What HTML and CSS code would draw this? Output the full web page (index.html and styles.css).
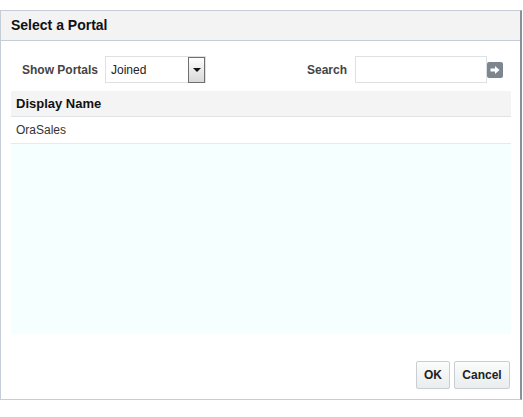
FILE: index.html
```html
<!DOCTYPE html>
<html lang="en">
<head>
  <meta charset="UTF-8">
  <title>Select a Portal</title>
  <link rel="stylesheet" href="styles.css">
</head>
<body>
  <div class="dialog">
    <div class="dialog-header">Select a Portal</div>

    <div class="dialog-body">
      <div class="toolbar">
        <div class="field">
          <label class="field-label">Show Portals</label>
          <div class="select">
            <span class="select-value">Joined</span>
            <span class="select-btn"><span class="caret"></span></span>
          </div>
        </div>
        <div class="field search">
          <label class="field-label">Search</label>
          <input class="search-input" type="text">
          <span class="go-btn">
            <svg width="16" height="16" viewBox="0 0 16 16">
              <rect x="0" y="0" width="16" height="16" rx="2" fill="#7d868f"/>
              <path d="M3.5 6.5h4.5V4l4.5 4-4.5 4V9.5H3.5z" fill="#fff"/>
            </svg>
          </span>
        </div>
      </div>

      <div class="table">
        <div class="table-head">Display Name</div>
        <div class="table-row">OraSales</div>
        <div class="table-empty"></div>
      </div>

      <div class="actions">
        <button class="btn btn-ok">OK</button>
        <button class="btn btn-cancel">Cancel</button>
      </div>
    </div>
  </div>
</body>
</html>
```

FILE: styles.css
```css
* {
  margin: 0;
  padding: 0;
  box-sizing: border-box;
}

body {
  font-family: "Liberation Sans", Arial, sans-serif;
  font-size: 12px;
  color: #333;
  background: #fff;
}

.dialog {
  margin-top: 10px;
  width: 522px;
  height: 390px;
  border: 1px solid #c5cdd6;
  border-right: 2px solid #8a9097;
  display: flex;
  flex-direction: column;
}

.dialog-header {
  height: 30px;
  padding: 6px 10px 0;
  background: #f3f3f3;
  border-bottom: 1px solid #c5cdd6;
  font-size: 14px;
  font-weight: bold;
  color: #111;
}

.dialog-body {
  flex: 1;
  display: flex;
  flex-direction: column;
  padding: 0 9px 10px 10px;
}

.toolbar {
  display: flex;
  justify-content: space-between;
  align-items: center;
  padding: 15px 8px 8px 11px;
}

.field {
  display: flex;
  align-items: center;
}

.field-label {
  font-weight: bold;
  color: #444;
  margin-right: 7px;
}

.search .field-label {
  margin-right: 8px;
}

.select {
  display: flex;
  align-items: center;
  width: 101px;
  height: 27px;
  border: 1px solid #dde1e4;
}

.select-value {
  flex: 1;
  padding-left: 5px;
  color: #222;
}

.select-btn {
  width: 17px;
  height: 26px;
  border: 1px solid #6f6f6f;
  background: linear-gradient(#fdfdfd, #d8d8d8);
  display: flex;
  align-items: center;
  justify-content: center;
}

.caret {
  width: 0;
  height: 0;
  border-left: 4px solid transparent;
  border-right: 4px solid transparent;
  border-top: 4px solid #111;
}

.search-input {
  width: 132px;
  height: 27px;
  border: 1px solid #dde1e4;
  outline: none;
}

.go-btn {
  display: flex;
}

.table {
  flex: 1;
  display: flex;
  flex-direction: column;
  margin-bottom: 27px;
}

.table-head {
  height: 26px;
  padding: 5px 5px 0;
  background: #f4f4f4;
  border-bottom: 1px solid #dfe3e6;
  font-size: 13px;
  font-weight: bold;
  color: #111;
}

.table-row {
  height: 27px;
  padding: 6px 5px 0;
  border-bottom: 1px solid #e6eaec;
  color: #333;
}

.table-empty {
  flex: 1;
  background: #f6ffff;
}

.actions {
  display: flex;
  justify-content: flex-end;
  gap: 4px;
  margin-right: 1px;
}

.btn {
  font-family: "Liberation Sans", Arial, sans-serif;
  font-size: 12px;
  font-weight: bold;
  color: #222;
  height: 28px;
  padding: 0;
  border: 1px solid #c9ced3;
  border-radius: 2px;
  background: linear-gradient(#fbfcfc, #e9edef);
}

.btn-ok {
  width: 34px;
}

.btn-cancel {
  width: 56px;
}
```
